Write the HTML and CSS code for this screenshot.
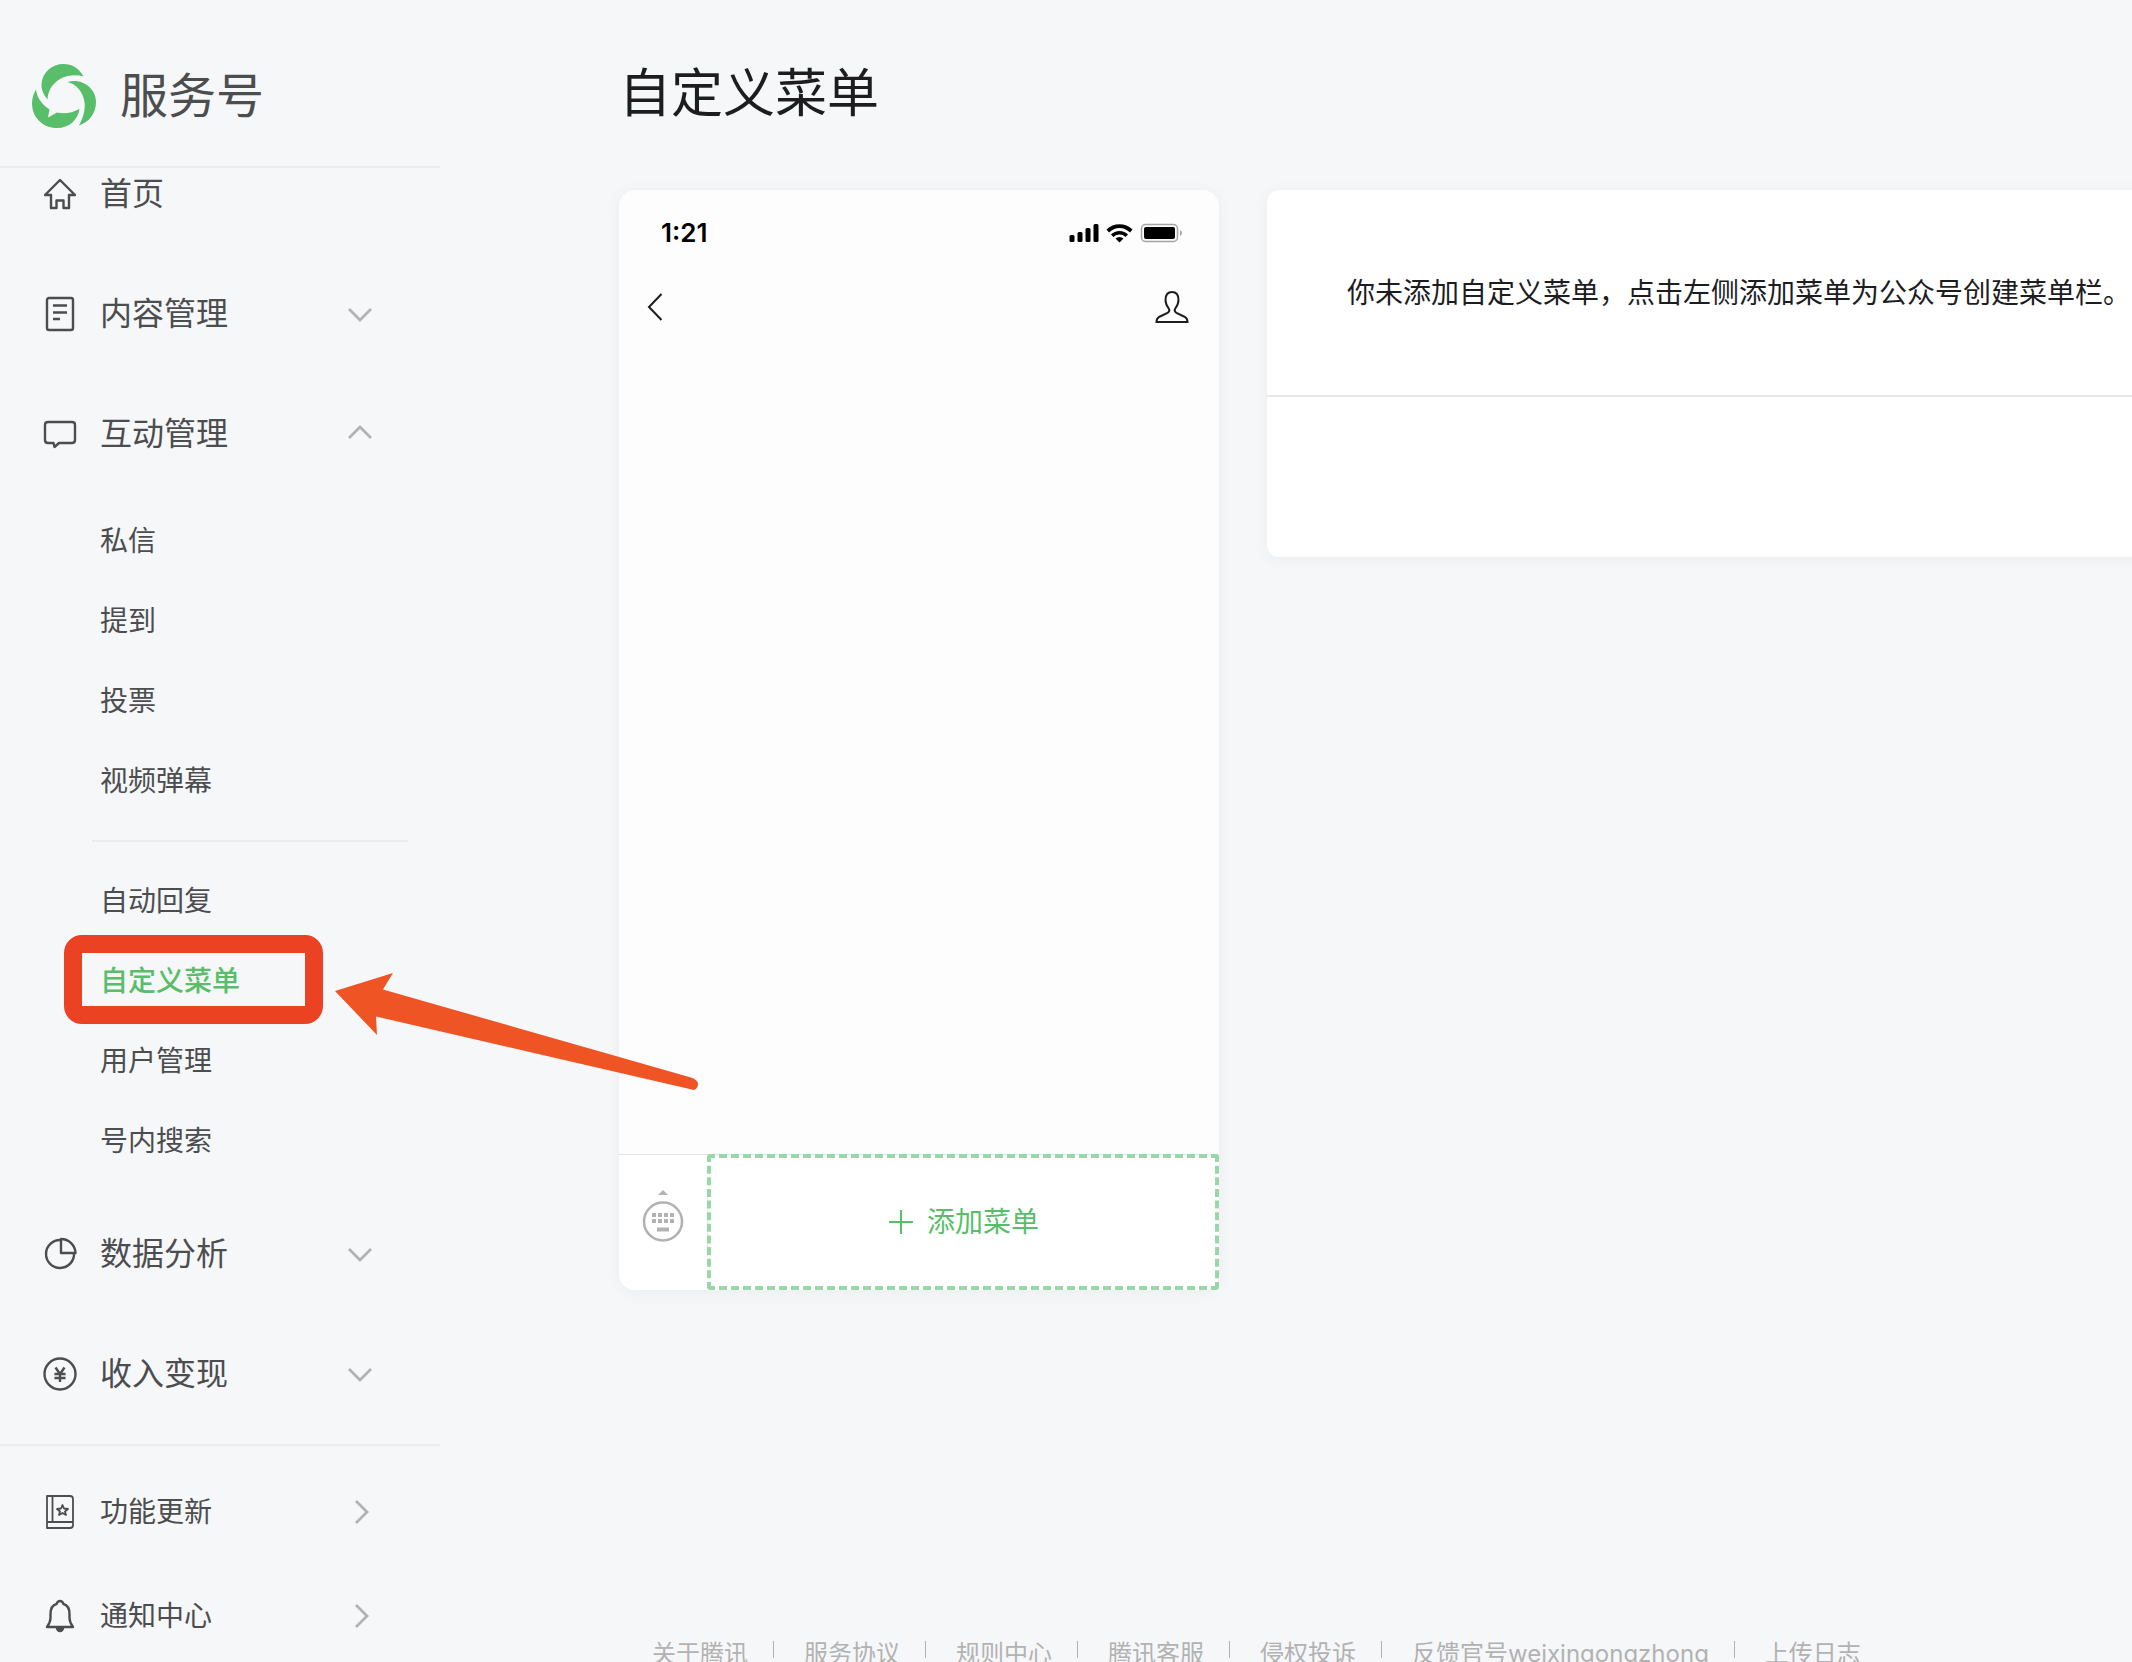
FILE: index.html
```html
<!DOCTYPE html>
<html lang="zh-CN">
<head>
  <meta charset="UTF-8">
  <meta name="viewport" content="width=device-width, initial-scale=1.0">
  <title>自定义菜单</title>
  <link rel="stylesheet" href="styles.css">
</head>
<body>
  <div class="layout">
    <aside class="sidebar">
      <a class="brand" href="#">
        <svg class="brand-logo" viewBox="0 0 64 64" fill="#58be6a" aria-hidden="true">
          <path d="M15.500 35.500C11 30 9 25 9.500 20C10.500 8 20 0 31.500 0C40 0 47.500 4.500 51.500 12.500C44 10.500 36 11 29 14.500C21 18.500 16 26 15.500 35.500Z"/>
          <path d="M35.500 18C41 16.500 46 16.500 50 18.500C59 22 64 29.500 64 38C64 49 57 58.500 47 61.500C51 54 53.500 46 52.500 38C51 28.500 45.500 20.500 35.500 18Z"/>
          <path d="M4 25.500C5 34 10 40.500 17.500 45.500L16 53.500L25 48.500C32 50 40 49 47.500 45C46 56 37 64 25 64C11 64 0 53.500 0 39.500C0 34.500 1.500 29.500 4 25.500Z"/>
        </svg>
        <span>服务号</span>
      </a>

      <nav class="nav">
        <a class="nav-item nav-home" href="#">
          <svg class="icon" viewBox="0 0 40 40" aria-hidden="true"><path d="M20 6L5 21H11V34H16.500V26.500H23.500V34H29V21H35Z"/></svg>
          <span>首页</span>
        </a>
        <button class="nav-item" type="button">
          <svg class="icon" viewBox="0 0 40 40" aria-hidden="true"><rect x="7" y="4" width="26" height="32" rx="2"/><path d="M13 11.500H27M13 18.500H27M13 25H20"/></svg>
          <span>内容管理</span>
          <svg class="chevron" viewBox="0 0 28 28" aria-hidden="true"><path d="M3 9L14 20L25 9"/></svg>
        </button>
        <button class="nav-item" type="button" aria-expanded="true">
          <svg class="icon" viewBox="0 0 40 40" aria-hidden="true"><path d="M8 8H32Q35 8 35 11V26Q35 29 32 29H19L14.500 33L13.500 29H8Q5 29 5 26V11Q5 8 8 8Z"/></svg>
          <span>互动管理</span>
          <svg class="chevron" viewBox="0 0 28 28" aria-hidden="true"><path d="M3 18L14 7L25 18"/></svg>
        </button>
        <ul class="sub">
          <li><a href="#">私信</a></li>
          <li><a href="#">提到</a></li>
          <li><a href="#">投票</a></li>
          <li><a href="#">视频弹幕</a></li>
          <li class="sub-line"></li>
          <li><a href="#">自动回复</a></li>
          <li class="marked">
            <a class="active" href="#">自定义菜单</a>
            <span class="mark-box"></span>
            <svg class="mark-arrow" viewBox="0 0 366 120" fill="#ee5424" aria-hidden="true"><path d="M0 18L58 0L48 16.500L356 104.500Q363 107 363 111T359 117L41 43.500L42 62Z"/></svg>
          </li>
          <li><a href="#">用户管理</a></li>
          <li><a href="#">号内搜索</a></li>
        </ul>
        <button class="nav-item" type="button">
          <svg class="icon" viewBox="0 0 40 40" aria-hidden="true"><path d="M21 5V19H35.500A14.500 14.500 0 0 0 21 5Z"/><path d="M21 6A14 14 0 1 0 34 19"/></svg>
          <span>数据分析</span>
          <svg class="chevron" viewBox="0 0 28 28" aria-hidden="true"><path d="M3 9L14 20L25 9"/></svg>
        </button>
        <button class="nav-item" type="button">
          <svg class="icon" viewBox="0 0 40 40" aria-hidden="true"><circle cx="20" cy="20" r="15.500"/><path d="M15.500 13.500L20 20L24.500 13.500M20 20V28M14.500 20H25.500M14.500 24H25.500"/></svg>
          <span>收入变现</span>
          <svg class="chevron" viewBox="0 0 28 28" aria-hidden="true"><path d="M3 9L14 20L25 9"/></svg>
        </button>
      </nav>

      <div class="sidebar-foot">
        <a class="foot-item" href="#">
          <svg class="icon icon-thin" viewBox="0 0 40 40" aria-hidden="true"><path d="M7 4H30Q33 4 33 7V33Q33 36 30 36H7ZM12.500 4V30M7 30H33"/><path d="M22.500 13L24 16.500L28 17L25 19.500L26 23L22.500 21L19 23L20 19.500L17 17L21 16.500Z"/></svg>
          <span>功能更新</span>
          <svg class="chevron" viewBox="0 0 28 28" aria-hidden="true"><path d="M10 3L21 14L10 25"/></svg>
        </a>
        <a class="foot-item" href="#">
          <svg class="icon" viewBox="0 0 40 40" aria-hidden="true"><path d="M7 31C9 28 10.500 26 10.500 22V18C10.500 12 13 9 16.500 8Q17.500 5 20 5T23.500 8C27 9 29.500 12 29.500 18V22C29.500 26 31 28 33 31Z"/><path class="fill" d="M17 32H23A3 3 0 0 1 17 32Z"/></svg>
          <span>通知中心</span>
          <svg class="chevron" viewBox="0 0 28 28" aria-hidden="true"><path d="M10 3L21 14L10 25"/></svg>
        </a>
      </div>
    </aside>

    <main class="main">
      <h1 class="title">自定义菜单</h1>

      <div class="content">
        <section class="phone">
          <div class="phone-status">
            <span>1:21</span>
            <svg class="status-icons" viewBox="0 0 114 20" aria-hidden="true">
              <rect x="0.500" y="12" width="5" height="7" rx="1.500"/>
              <rect x="8.500" y="9" width="5" height="10" rx="1.500"/>
              <rect x="16.500" y="5" width="5" height="14" rx="1.500"/>
              <rect x="24.500" y="1" width="5" height="18" rx="1.500"/>
              <path d="M37.500 6.500A18.500 18.500 0 0 1 63.500 6.500L61 9.500A14.500 14.500 0 0 0 40 9.500ZM42 11.500A12 12 0 0 1 59 11.500L56.500 14A8.500 8.500 0 0 0 44.500 14ZM46.500 15.500A6 6 0 0 1 54.500 15.500L50.500 19.500Z"/>
              <rect x="72.500" y="1.500" width="36" height="17" rx="4" fill="none" stroke="#a5a5a5" stroke-width="1.500"/>
              <rect x="75" y="4" width="31" height="12" rx="2"/>
              <path d="M111 7Q113 8 113 10T111 13Z" fill="#a5a5a5"/>
            </svg>
          </div>
          <div class="phone-nav">
            <button class="phone-btn" type="button" aria-label="返回">
              <svg viewBox="0 0 16 32"><path d="M14.500 3L2 16L14.500 29"/></svg>
            </button>
            <button class="phone-btn" type="button" aria-label="资料">
              <svg viewBox="0 0 34 32"><path d="M17 1C12 1 10.500 5 10.500 9C10.500 13 12.500 16 14 18C15 20 14 21 12.500 22L4 26Q1.500 27.500 1.500 31H32.500Q32.500 27.500 30 26L21.500 22C20 21 19 20 20 18C21.500 16 23.500 13 23.500 9C23.500 5 22 1 17 1Z"/></svg>
            </button>
          </div>
          <div class="phone-bar">
            <button class="keyboard" type="button" aria-label="键盘">
              <svg viewBox="0 0 42 54" fill="#b2b2b2">
                <path d="M21 0L26 5H16Z"/>
                <circle cx="21" cy="31.500" r="19" fill="none" stroke="#b2b2b2" stroke-width="2.500"/>
                <path d="M10 23h4v4h-4zM16 23h4v4h-4zM22 23h4v4h-4zM28 23h4v4h-4zM10 29h4v4h-4zM16 29h4v4h-4zM22 29h4v4h-4zM28 29h4v4h-4zM15 37.500h12v4h-12z"/>
              </svg>
            </button>
            <button class="add-menu" type="button">
              <svg viewBox="0 0 28 28" aria-hidden="true"><path d="M14 2V26M2 14H26"/></svg>
              <span>添加菜单</span>
            </button>
          </div>
        </section>

        <section class="panel">
          <p class="panel-tip">你未添加自定义菜单，点击左侧添加菜单为公众号创建菜单栏。</p>
          <div class="panel-foot"></div>
        </section>
      </div>

      <footer class="footer">
        <a href="#">关于腾讯</a>
        <a href="#">服务协议</a>
        <a href="#">规则中心</a>
        <a href="#">腾讯客服</a>
        <a href="#">侵权投诉</a>
        <a href="#">反馈官号weixingongzhong</a>
        <a href="#">上传日志</a>
      </footer>
    </main>
  </div>
</body>
</html>
```
FILE: styles.css
```css
* {
  box-sizing: border-box;
}
body {
  margin: 0;
  background: #f6f7f9;
  color: #1d1d1f;
  font-family: Inter, "Noto Sans CJK SC", sans-serif;
  font-size: 28px;
}
a {
  color: inherit;
  text-decoration: none;
}
button {
  border: 0;
  padding: 0;
  background: none;
  color: inherit;
  font: inherit;
  cursor: pointer;
}
svg {
  display: block;
  flex: none;
}
.layout {
  display: flex;
  height: 100vh;
  overflow: hidden;
}

/* sidebar */
.sidebar {
  position: relative;
  z-index: 1;
  flex: none;
  width: 440px;
  color: #4c4d4f;
}
.brand {
  display: flex;
  align-items: center;
  gap: 24px;
  height: 168px;
  padding: 26px 0 0 32px;
  border-bottom: 2px solid #ebecee;
  font-size: 48px;
  line-height: 64px;
}
.brand-logo {
  width: 64px;
  height: 64px;
}
.nav {
  padding-bottom: 10px;
}
.nav-item,
.foot-item {
  display: flex;
  align-items: center;
  gap: 20px;
  width: 100%;
  height: 120px;
  padding: 0 66px 0 40px;
  line-height: 40px;
}
.nav-item {
  font-size: 32px;
}
.nav-home {
  height: 52px;
  margin-bottom: 34px;
}
.icon {
  width: 40px;
  height: 40px;
  fill: none;
  stroke: #4c4d4f;
  stroke-width: 2.4;
  stroke-linejoin: round;
}
.icon-thin {
  stroke-width: 1.8;
}
.icon .fill {
  fill: #4c4d4f;
}
.chevron {
  width: 28px;
  height: 28px;
  margin-left: auto;
  fill: none;
  stroke: #b2b2b2;
  stroke-width: 2.8;
}
.sub {
  margin: 6px 0 14px;
  padding: 0;
  list-style: none;
}
.sub a {
  display: block;
  padding: 2px 0 0 100px;
  line-height: 78px;
}
.sub .active {
  color: #58be6a;
  font-weight: 500;
}
.sub-line {
  height: 2px;
  margin: 20px 32px 18px 92px;
  background: #ebecee;
}
.sidebar-foot {
  padding-top: 14px;
  border-top: 2px solid #ebecee;
}
.foot-item {
  height: 104px;
}

/* highlight drawn over the current entry */
.marked {
  position: relative;
}
.mark-box {
  position: absolute;
  top: -5px;
  left: 64px;
  width: 259px;
  height: 89px;
  border: 18px solid #eb4224;
  border-radius: 18px;
  pointer-events: none;
}
.mark-arrow {
  position: absolute;
  top: 33px;
  left: 335px;
  width: 366px;
  height: 120px;
  pointer-events: none;
}

/* content */
.main {
  flex: 1;
  min-width: 0;
  padding-left: 179px;
}
.title {
  margin: 0;
  padding: 54px 0 56px;
  font-size: 52px;
  font-weight: 400;
  line-height: 80px;
}
.content {
  display: flex;
  align-items: flex-start;
  gap: 48px;
}
.phone {
  display: flex;
  flex: none;
  flex-direction: column;
  width: 600px;
  height: 1100px;
  border-radius: 16px;
  background: #fdfdfd;
  box-shadow: 0 2px 16px rgba(0, 0, 0, 0.05);
}
.phone-status {
  display: flex;
  align-items: center;
  justify-content: space-between;
  padding: 28px 36px 0 42px;
  color: #000;
  font-size: 26px;
  font-weight: 600;
  line-height: 30px;
}
.status-icons {
  width: 114px;
  height: 20px;
}
.phone-nav {
  display: flex;
  justify-content: space-between;
  padding: 43px 30px 0 28px;
}
.phone-btn svg {
  height: 32px;
  fill: none;
  stroke: #1d1d1f;
  stroke-width: 2;
}
.phone-bar {
  display: flex;
  align-items: center;
  height: 136px;
  margin-top: auto;
  border-top: 1px solid #e4e4e4;
  border-radius: 0 0 16px 16px;
  background: #fff;
}
.keyboard {
  display: flex;
  align-items: flex-start;
  justify-content: center;
  width: 89px;
  height: 66px;
  border-right: 1px solid #e4e4e4;
}
.keyboard svg {
  width: 42px;
  height: 54px;
}
.add-menu {
  display: flex;
  flex: 1;
  align-items: center;
  justify-content: center;
  gap: 12px;
  height: 136px;
  margin: -1px 0 0 -1px;
  border: 4px dashed #9ad7a8;
  border-radius: 4px;
  color: #58be6a;
  line-height: 40px;
}
.add-menu svg {
  width: 28px;
  height: 28px;
  stroke: #58be6a;
  stroke-width: 2;
}
/* runs past the right edge of the window */
.panel {
  flex: 1;
  margin-right: -40px;
  border-radius: 12px;
  background: #fff;
  box-shadow: 0 2px 16px rgba(0, 0, 0, 0.05);
}
.panel-tip {
  margin: 0;
  padding: 83px 0 82px 80px;
  border-bottom: 2px solid #e7e7e7;
  line-height: 40px;
  white-space: nowrap;
}
.panel-foot {
  height: 160px;
}
.footer {
  display: flex;
  padding: 346px 0 40px 33px;
  color: #b2b2b2;
  font-size: 24px;
  line-height: 36px;
  white-space: nowrap;
}
.footer a {
  display: flex;
}
.footer a + a::before {
  content: "";
  width: 1px;
  height: 17px;
  margin: 5px 30px 0 25px;
  background: #b2b2b2;
}
```
